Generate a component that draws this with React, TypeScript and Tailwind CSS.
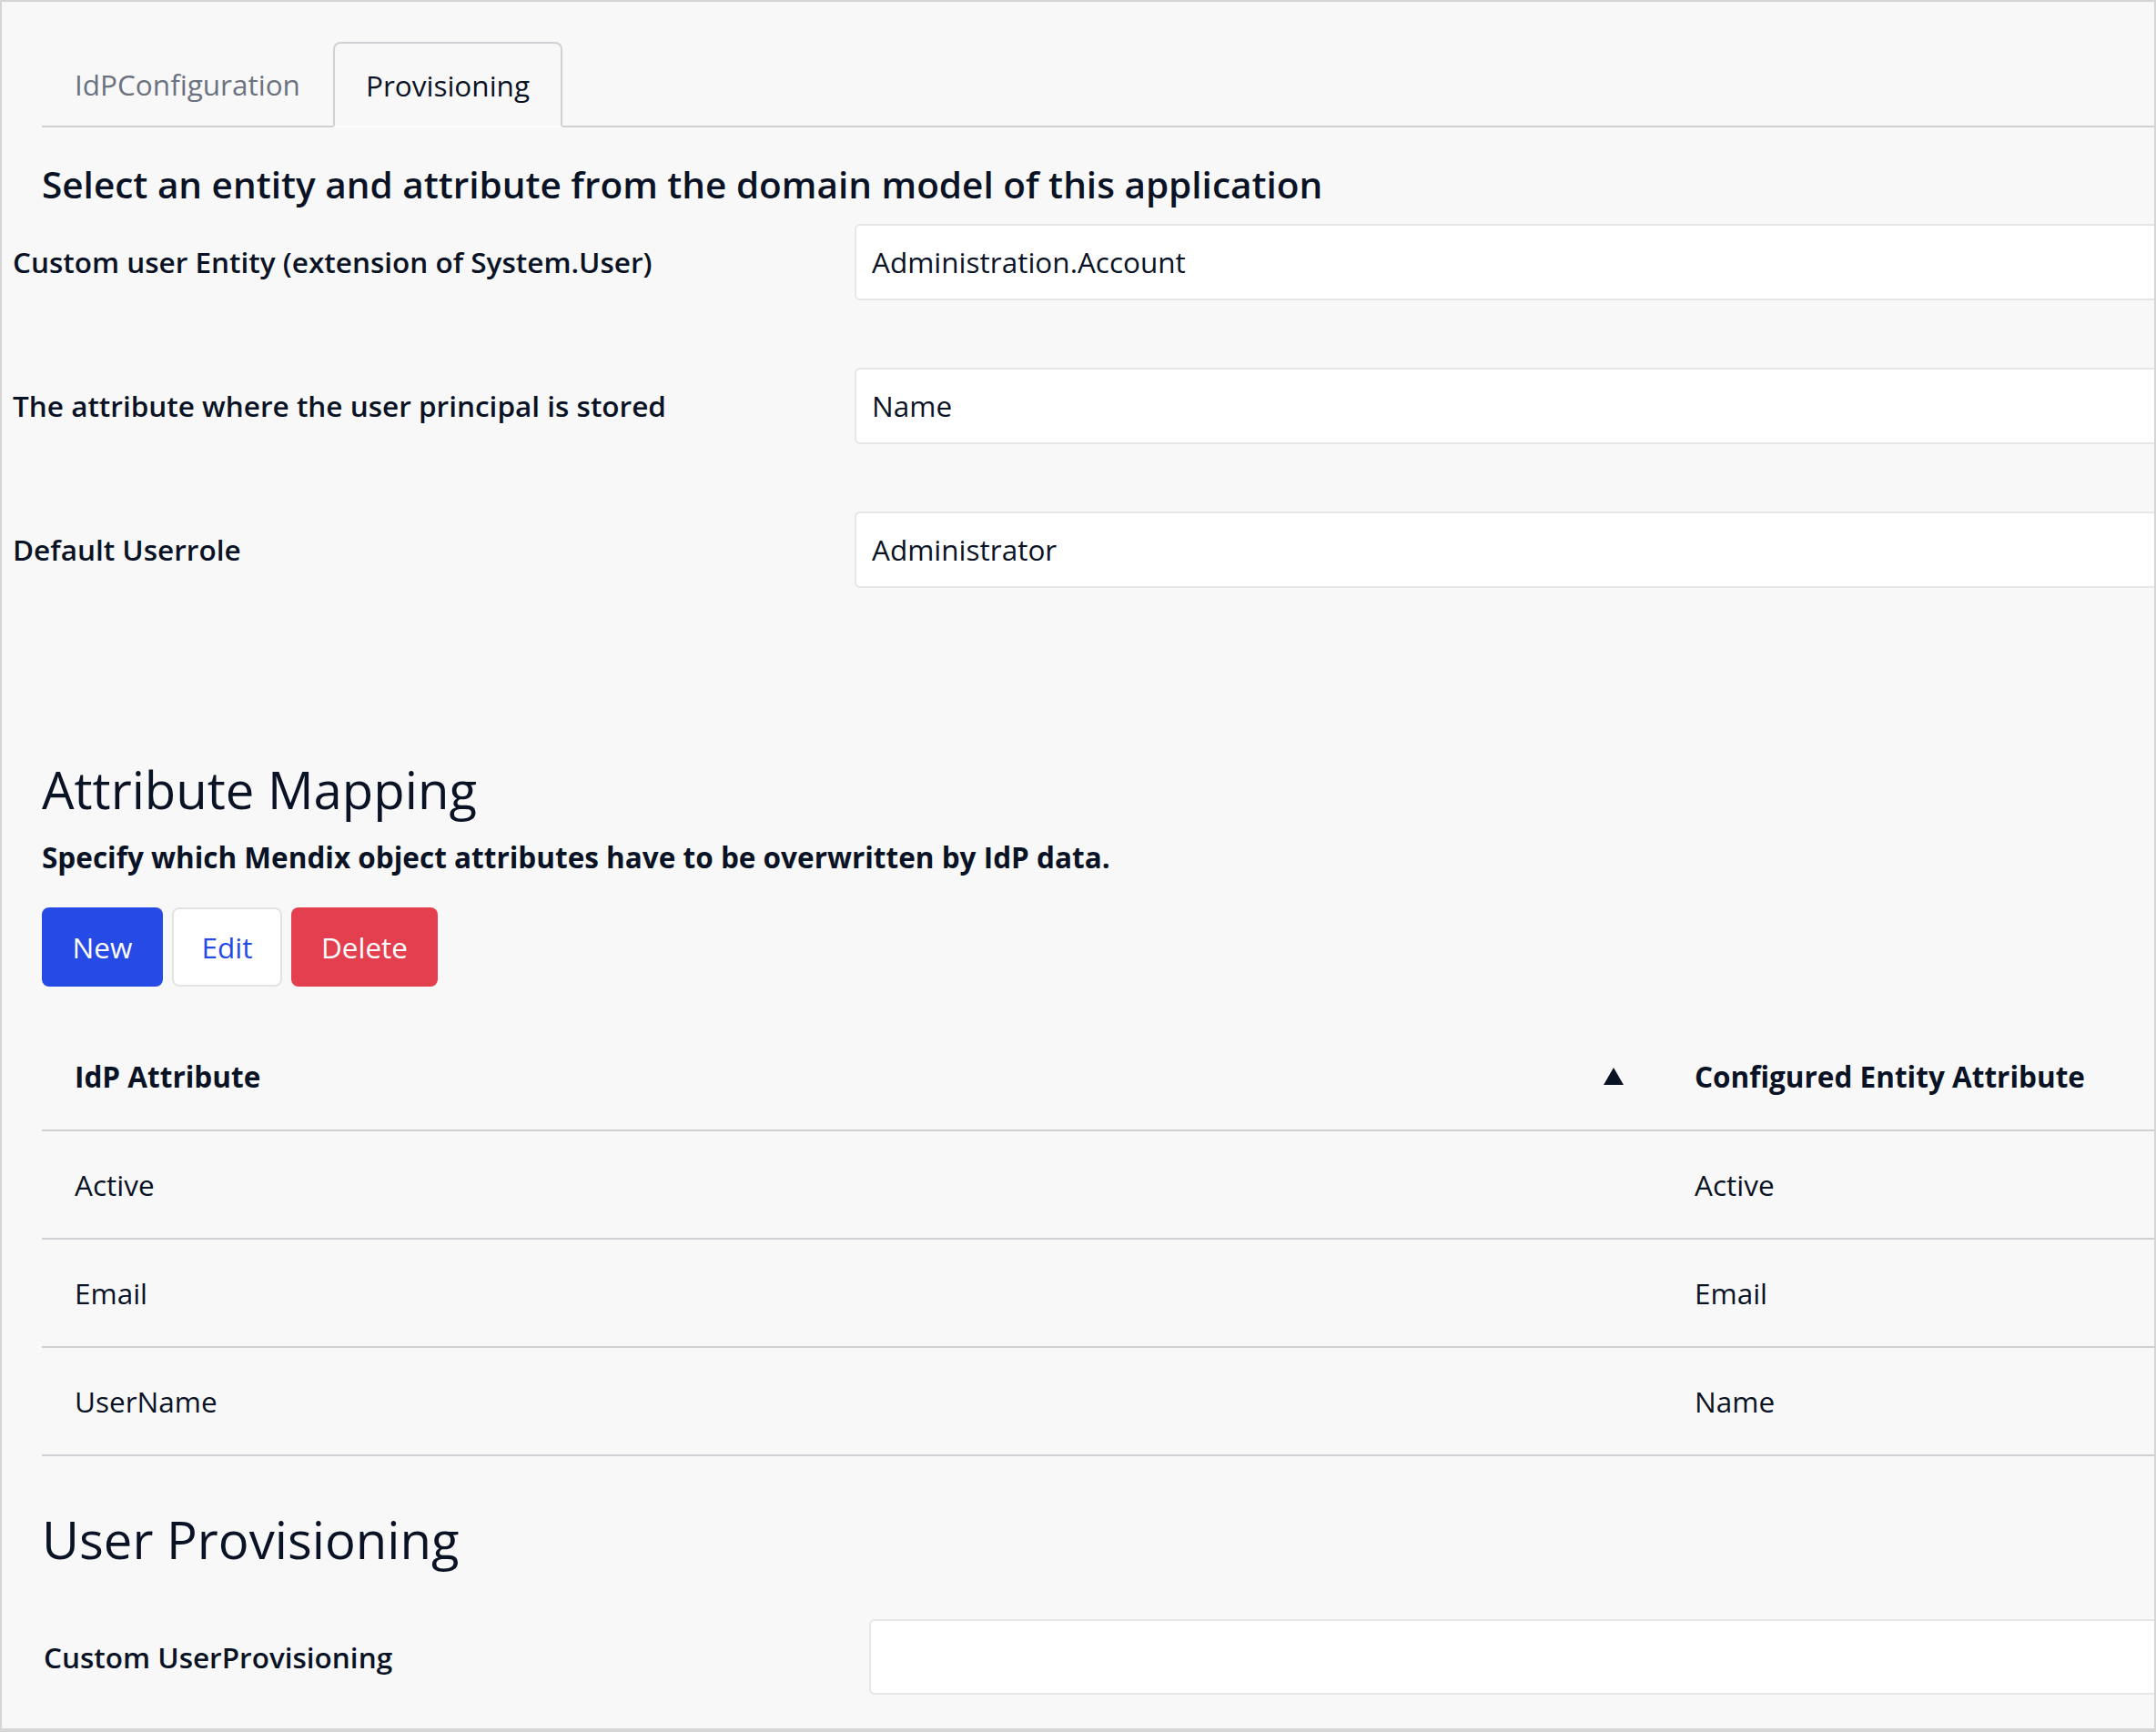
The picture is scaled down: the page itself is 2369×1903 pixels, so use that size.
import React from 'react';

const rows = [
  { idp: 'Active', entity: 'Active' },
  { idp: 'Email', entity: 'Email' },
  { idp: 'UserName', entity: 'Name' },
];

const fields = [
  { label: 'Custom user Entity (extension of System.User)', value: 'Administration.Account' },
  { label: 'The attribute where the user principal is stored', value: 'Name' },
  { label: 'Default Userrole', value: 'Administrator' },
];

export default function App() {
  return (
    <div
      className="w-[2369px] h-[1903px] overflow-hidden border-2 border-b-4 border-[#d6d6d6] bg-[#f8f8f8] text-[#0a1325]"
      style={{ fontFamily: '"Open Sans", "Noto Sans", sans-serif' }}
    >
      {/* Tabs */}
      <div className="mt-[44px] ml-[44px] flex h-[94px] border-b-2 border-[#cfd1d4]">
        <div className="flex h-[92px] items-center px-[36px] pt-[2px] text-[31.5px] text-[#6b7280]">IdPConfiguration</div>
        <div className="-mb-[2px] flex h-[94px] items-center rounded-t-[8px] border-2 border-b-2 border-[#cfd1d4] border-b-white bg-[#f8f8f8] px-[34px] pt-[2px] text-[31.5px]">
          Provisioning
        </div>
      </div>

      <h3 className="mt-[38px] ml-[44px] h-[50px] text-[40.5px] font-semibold leading-[50px]">
        Select an entity and attribute from the domain model of this application
      </h3>

      {/* Form */}
      <div className="mt-[18px] flex flex-col gap-[74px]">
        {fields.map((f) => (
          <div key={f.label} className="flex h-[84px] items-center">
            <div className="w-[937px] shrink-0 pl-[12px] text-[31.5px] font-semibold">{f.label}</div>
            <div className="flex h-[84px] w-[1500px] shrink-0 items-center rounded-[6px] border-2 border-[#e6e6e8] bg-white pl-[17px] text-[31.5px]">
              {f.value}
            </div>
          </div>
        ))}
      </div>

      {/* Attribute mapping */}
      <div className="ml-[44px]">
        <h2 className="mt-[186px] h-[70px] text-[56.25px] font-medium leading-[70px]">Attribute Mapping</h2>
        <p className="mt-[20px] h-[40px] text-[31.5px] font-bold leading-[40px]">
          Specify which Mendix object attributes have to be overwritten by IdP data.
        </p>
        <div className="mt-[35px] flex gap-[10px]">
          <button className="h-[87px] w-[133px] rounded-[8px] bg-[#264ae5] text-[31.5px] text-white">New</button>
          <button className="h-[87px] w-[121px] rounded-[8px] border-2 border-[#e3e3e3] bg-white text-[31.5px] text-[#264ae5]">
            Edit
          </button>
          <button className="h-[87px] w-[161px] rounded-[8px] bg-[#e33f4e] text-[31.5px] text-white">Delete</button>
        </div>

        {/* Table */}
        <div className="mt-[40px] w-[3000px]">
          <div className="flex h-[119px] items-center border-b-2 border-[#cfd1d4] text-[31.5px] font-bold">
            <div className="flex w-[1780px] shrink-0 items-center justify-between pl-[36px] pr-[42px]">
              <span>IdP Attribute</span>
              <svg width="22" height="19" viewBox="0 0 22 19">
                <polygon points="11,0 22,19 0,19" fill="#0a1325" />
              </svg>
            </div>
            <div className="pl-[36px]">Configured Entity Attribute</div>
          </div>
          {rows.map((r) => (
            <div key={r.idp} className="flex h-[119px] items-center border-b-2 border-[#cfd1d4] text-[31.5px]">
              <div className="w-[1780px] shrink-0 pl-[36px]">{r.idp}</div>
              <div className="pl-[36px]">{r.entity}</div>
            </div>
          ))}
        </div>
      </div>

      {/* User provisioning */}
      <div className="ml-[44px]">
        <h2 className="mt-[56px] h-[70px] text-[56.25px] font-medium leading-[70px]">User Provisioning</h2>
        <div className="mt-[53px] flex h-[83px] items-center">
          <div className="w-[909px] shrink-0 pl-[2px] text-[31.5px] font-semibold">Custom UserProvisioning</div>
          <div className="h-[83px] w-[1500px] shrink-0 rounded-[6px] border-2 border-[#e6e6e8] bg-white" />
        </div>
      </div>
    </div>
  );
}
